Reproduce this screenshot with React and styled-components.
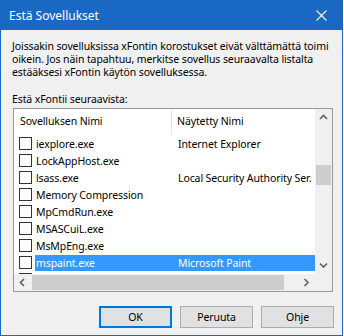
import React from "react";
import styled, { createGlobalStyle } from "styled-components";

const Global = createGlobalStyle`
  html, body { margin: 0; padding: 0; background: #ffffff; }
  * { box-sizing: border-box; }
`;

const FONT = `"Noto Sans", "Open Sans", Arial, sans-serif`;
const BLUE = "#1868c4";

const Window = styled.div`
  width: 343px;
  height: 336px;
  border: 1px solid ${BLUE};
  background: #f0f0f0;
  display: flex;
  flex-direction: column;
  font-family: ${FONT};
  font-size: 10.5px;
  letter-spacing: -0.1px;
  color: #000;
`;

const TitleBar = styled.div`
  height: 29px;
  background: ${BLUE};
  display: flex;
  align-items: center;
  justify-content: space-between;
  padding-left: 8px;
  color: #fff;
  font-size: 12px;
  letter-spacing: 0;
  flex: none;
`;

const CloseButton = styled.div`
  width: 46px;
  height: 29px;
  display: flex;
  align-items: center;
  justify-content: center;
  margin-right: -2px;
`;

const Body = styled.div`
  flex: 1;
  display: flex;
  flex-direction: column;
  padding: 10px 9px 0 11px;
`;

const Message = styled.div`
  line-height: 13px;
  white-space: nowrap;
`;

const Label = styled.div`
  line-height: 13px;
  margin-top: 14px;
`;

const ListBox = styled.div`
  margin: 2px 0 0 1px;
  width: 320px;
  height: 184px;
  border: 1px solid #999;
  background: #fff;
  display: grid;
  grid-template-columns: 1fr 17px;
  grid-template-rows: 1fr 17px;
`;

const Content = styled.div`
  overflow: hidden;
`;

const Header = styled.div`
  height: 26px;
  display: flex;
  align-items: center;
`;

const HeaderCell = styled.div`
  height: 100%;
  display: flex;
  align-items: center;
  padding-left: ${(p) => p.$pad}px;
  width: ${(p) => (p.$width ? `${p.$width}px` : "auto")};
  flex: ${(p) => (p.$width ? "none" : "1")};
  border-right: ${(p) => (p.$sep ? "1px solid #e5e5e5" : "none")};
  padding-bottom: 2px;
`;

const Row = styled.div`
  height: 17px;
  display: flex;
  align-items: center;
  padding-left: 5px;
`;

const Check = styled.div`
  width: 13px;
  height: 13px;
  border: 1px solid #333;
  background: #fff;
  flex: none;
`;

const RowLabel = styled.div`
  flex: 1;
  height: 16px;
  margin-left: 3px;
  display: flex;
  align-items: center;
  white-space: nowrap;
  overflow: hidden;
  background: ${(p) => (p.$selected ? "#3399ff" : "transparent")};
  color: ${(p) => (p.$selected ? "#fff" : "#000")};
`;

const NameCell = styled.div`
  width: 137px;
  padding-left: 1px;
  flex: none;
  overflow: hidden;
`;

const DisplayCell = styled.div`
  padding-left: 6px;
  flex: 1;
  overflow: hidden;
`;

const VScroll = styled.div`
  background: #f0f0f0;
  display: flex;
  flex-direction: column;
`;

const HScroll = styled.div`
  background: #f0f0f0;
  display: flex;
`;

const Corner = styled.div`
  background: #f0f0f0;
`;

const Arrow = styled.div`
  width: 17px;
  height: 17px;
  flex: none;
  display: flex;
  align-items: center;
  justify-content: center;
`;

const Track = styled.div`
  flex: 1;
  display: flex;
  flex-direction: ${(p) => (p.$vertical ? "column" : "row")};
`;

const Thumb = styled.div`
  background: #cdcdcd;
  ${(p) =>
    p.$vertical
      ? `margin: 39px 1px 0 1px; height: 20px;`
      : `margin: 1px 14px 1px 1px; flex: 1;`}
`;

const ButtonRow = styled.div`
  display: flex;
  justify-content: flex-end;
  gap: 8px;
  margin: 14px -1px 0 0;
`;

const Button = styled.div`
  width: 73px;
  height: 22px;
  display: flex;
  align-items: center;
  justify-content: center;
  background: #e1e1e1;
  border: 1px solid ${(p) => (p.$default ? "#0078d7" : "#adadad")};
  box-shadow: ${(p) => (p.$default ? "inset 0 0 0 1px #0078d7" : "none")};
`;

const Chevron = ({ dir }) => {
  const paths = {
    up: "M1 5 L4.5 1.5 L8 5",
    down: "M1 1.5 L4.5 5 L8 1.5",
    left: "M5 1 L1.5 4.5 L5 8",
    right: "M1.5 1 L5 4.5 L1.5 8",
  };
  const vertical = dir === "up" || dir === "down";
  return (
    <svg
      width={vertical ? 9 : 7}
      height={vertical ? 7 : 9}
      viewBox={vertical ? "0 0 9 7" : "0 0 7 9"}
    >
      <path d={paths[dir]} fill="none" stroke="#606060" strokeWidth="1.6" />
    </svg>
  );
};

const rows = [
  ["iexplore.exe", "Internet Explorer"],
  ["LockAppHost.exe", ""],
  ["lsass.exe", "Local Security Authority Ser."],
  ["Memory Compression", ""],
  ["MpCmdRun.exe", ""],
  ["MSASCuiL.exe", ""],
  ["MsMpEng.exe", ""],
  ["mspaint.exe", "Microsoft Paint", true],
  ["", ""],
];

export default function App() {
  return (
    <>
      <Global />
      <Window>
        <TitleBar>
          <span>Estä Sovellukset</span>
          <CloseButton>
            <svg width="11" height="11" viewBox="0 0 11 11">
              <path d="M0.5 0.5 L10.5 10.5 M10.5 0.5 L0.5 10.5" stroke="#fff" strokeWidth="1.1" />
            </svg>
          </CloseButton>
        </TitleBar>
        <Body>
          <Message>
            Joissakin sovelluksissa xFontin korostukset eivät välttämättä toimi
            <br />
            oikein. Jos näin tapahtuu, merkitse sovellus seuraavalta listalta
            <br />
            estääksesi xFontin käytön sovelluksessa.
          </Message>
          <Label>Estä xFontii seuraavista:</Label>
          <ListBox>
            <Content>
              <Header>
                <HeaderCell $width={158} $pad={6} $sep>
                  Sovelluksen Nimi
                </HeaderCell>
                <HeaderCell $pad={5}>Näytetty Nimi</HeaderCell>
              </Header>
              {rows.map(([name, display, selected], i) => (
                <Row key={i}>
                  <Check />
                  <RowLabel $selected={selected}>
                    <NameCell>{name}</NameCell>
                    <DisplayCell>{display}</DisplayCell>
                  </RowLabel>
                </Row>
              ))}
            </Content>
            <VScroll>
              <Arrow>
                <Chevron dir="up" />
              </Arrow>
              <Track $vertical>
                <Thumb $vertical />
              </Track>
              <Arrow>
                <Chevron dir="down" />
              </Arrow>
            </VScroll>
            <HScroll>
              <Arrow>
                <Chevron dir="left" />
              </Arrow>
              <Track>
                <Thumb />
              </Track>
              <Arrow>
                <Chevron dir="right" />
              </Arrow>
            </HScroll>
            <Corner />
          </ListBox>
          <ButtonRow>
            <Button $default>OK</Button>
            <Button>Peruuta</Button>
            <Button>Ohje</Button>
          </ButtonRow>
        </Body>
      </Window>
    </>
  );
}
